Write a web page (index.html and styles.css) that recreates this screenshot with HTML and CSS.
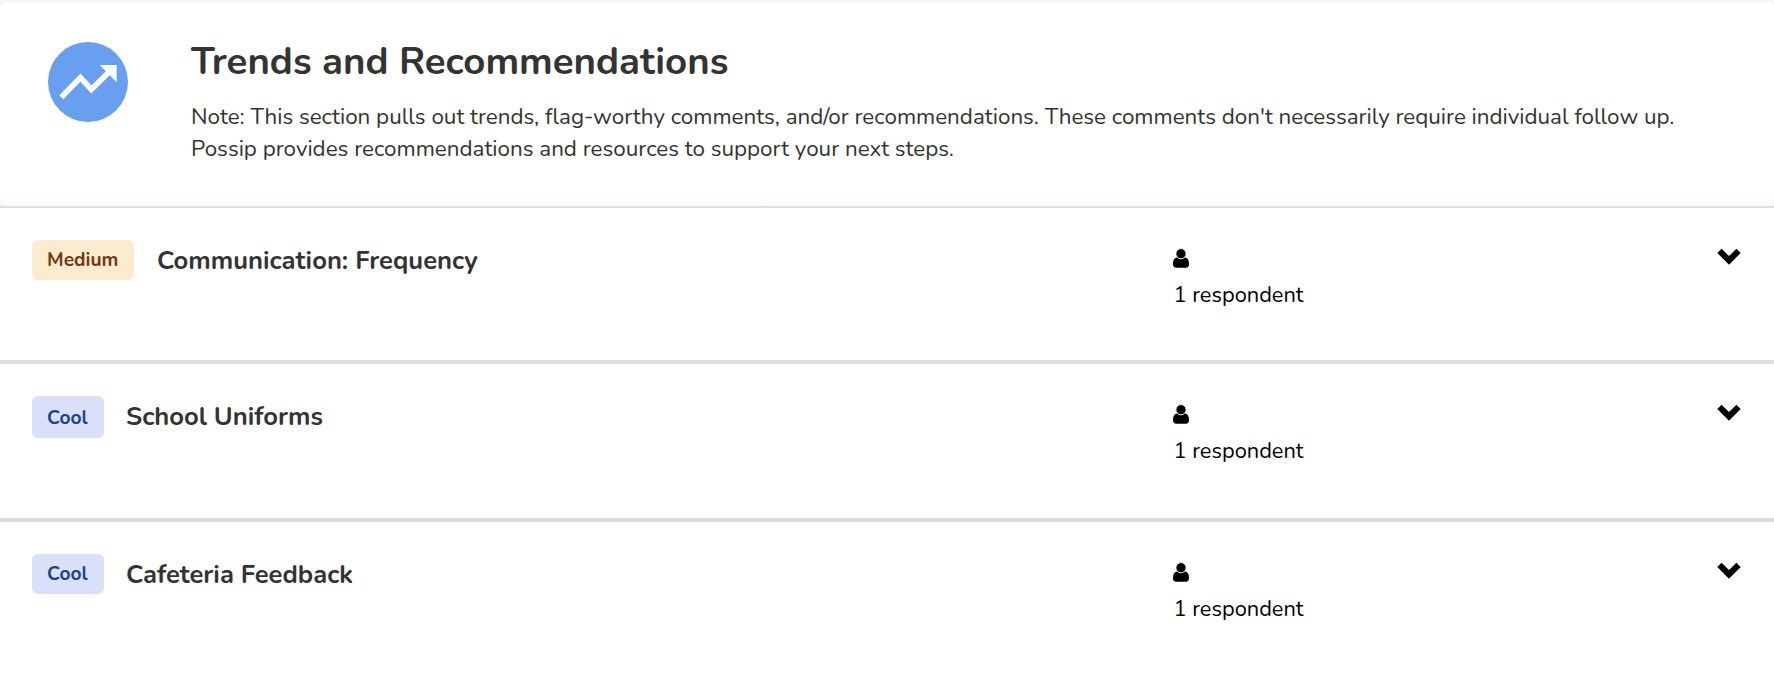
FILE: index.html
```html
<!DOCTYPE html>
<html lang="en">
<head>
  <meta charset="UTF-8">
  <meta name="viewport" content="width=device-width, initial-scale=1.0">
  <title>Trends and Recommendations</title>
  <link rel="stylesheet" href="styles.css">
</head>
<body>
  <!-- Shared icons -->
  <svg class="sprite" width="0" height="0">
    <symbol id="person" viewBox="0 0 16 20">
      <path d="M3.6 9.4 H12.4 Q16 10 16 16 Q16 19.7 12.8 19.7 H3.2 Q0 19.7 0 16 Q0 10 3.6 9.4 Z"/>
      <circle cx="8" cy="5.7" r="5.1" stroke="#fff" stroke-width="0.9"/>
    </symbol>
    <symbol id="chevron" viewBox="0 0 24 17">
      <path d="M0.3 5 L4.6 0.7 L12 8.1 L19.4 0.7 L23.7 5 L12 16.7 Z"/>
    </symbol>
  </svg>

  <div class="header-wrap">
    <div class="header">
      <svg class="trend-icon" viewBox="0 0 80 80">
        <circle cx="40" cy="40" r="40" fill="#689fef"/>
        <path d="M13.3 55.2 L32.4 35.6 L43.4 47.4 L63 28" fill="none" stroke="#fff" stroke-width="5.6"/>
        <path d="M51.7 23 H68.7 V40.2 Z" fill="#fff"/>
      </svg>
      <div class="header-text">
        <h1>Trends and Recommendations</h1>
        <p>Note: This section pulls out trends, flag-worthy comments, and/or recommendations. These comments don't necessarily require individual follow up.<br>Possip provides recommendations and resources to support your next steps.</p>
      </div>
    </div>
  </div>

  <div class="row">
    <div class="topic">
      <span class="badge medium">Medium</span>
      <h2>Communication: Frequency</h2>
    </div>
    <div class="respondents">
      <svg class="person"><use href="#person"/></svg>
      <span>1 respondent</span>
    </div>
    <svg class="chevron"><use href="#chevron"/></svg>
  </div>

  <div class="row row-tall">
    <div class="topic">
      <span class="badge cool">Cool</span>
      <h2>School Uniforms</h2>
    </div>
    <div class="respondents">
      <svg class="person"><use href="#person"/></svg>
      <span>1 respondent</span>
    </div>
    <svg class="chevron"><use href="#chevron"/></svg>
  </div>

  <div class="row">
    <div class="topic">
      <span class="badge cool">Cool</span>
      <h2>Cafeteria Feedback</h2>
    </div>
    <div class="respondents">
      <svg class="person"><use href="#person"/></svg>
      <span>1 respondent</span>
    </div>
    <svg class="chevron"><use href="#chevron"/></svg>
  </div>
</body>
</html>
```
FILE: styles.css
```css
* {
  box-sizing: border-box;
}
body {
  margin: 0;
  font-family: Nunito, Lato, sans-serif;
  background-color: #fff;
  color: #333;
  overflow: hidden;
}
h1, h2, p {
  margin: 0;
  white-space: nowrap;
}
.sprite {
  display: block;
}
.header-wrap {
  height: 208px;
  padding-top: 2px;
  background-color: #f5f5f5;
  border-bottom: 2px solid #ddd;
}
.header {
  display: flex;
  gap: 63px;
  height: 204px;
  padding: 40px 48px 0;
  border-radius: 6px;
  background: linear-gradient(#fff 92%, #fbfbfb);
}
.trend-icon {
  width: 80px;
  height: 80px;
}
h1 {
  font-size: 38.4px;
  line-height: 40px;
  font-weight: bold;
}
.header-text p {
  margin-top: 19px;
  font-size: 22.4px;
  line-height: 32px;
}
.row {
  display: flex;
  height: 156px;
  padding: 32px 32px 0;
  border-bottom: 4px solid #ddd;
}
.row-tall {
  height: 158px;
}
.row:last-child {
  border-bottom: none;
}
.topic {
  display: flex;
  align-items: flex-start;
  gap: 22px;
  width: 1141px;
}
.badge {
  height: 40px;
  padding: 0 15px;
  border-radius: 6px;
  font-size: 19.2px;
  line-height: 40px;
  font-weight: bold;
}
.medium {
  width: 102px;
  margin-right: 1px;
  background-color: #fdebd0;
  color: #713b12;
}
.cool {
  width: 72px;
  background-color: #dbe0fa;
  color: #204488;
}
.row-tall .badge {
  height: 42px;
  line-height: 44px;
}
h2 {
  font-size: 25.6px;
  line-height: 42px;
  font-weight: bold;
}
.respondents {
  display: flex;
  flex-direction: column;
  flex: 1;
  padding-top: 8px;
  color: #000;
  font-size: 21.8px;
  line-height: 32px;
}
.respondents span {
  margin: 11px 0 0 0.5px;
}
.person {
  width: 16px;
  height: 20px;
}
.chevron {
  width: 24px;
  height: 17px;
  margin: 8px 1px 0 0;
}
```
